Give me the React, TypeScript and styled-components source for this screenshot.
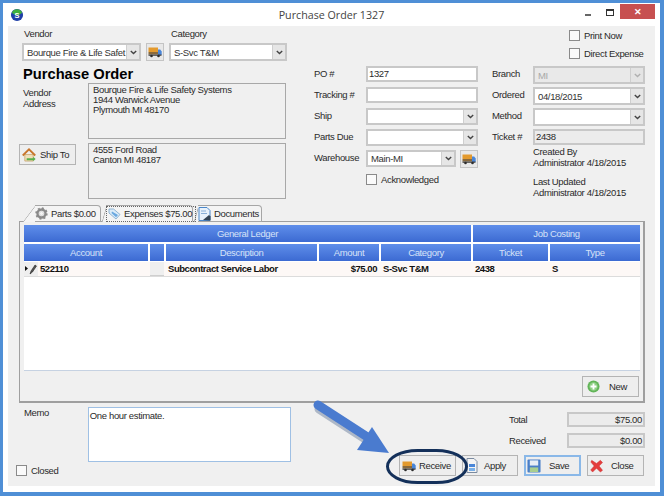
import styled, { createGlobalStyle } from "styled-components";

const GlobalStyle = createGlobalStyle`
  html, body {
    margin: 0;
    padding: 0;
    background: #4a8ad0;
  }
  * {
    box-sizing: border-box;
  }
  svg {
    flex: none;
  }
`;

const Window = styled.div`
  position: relative;
  width: 664px;
  height: 496px;
  overflow: hidden;
  background: #fff;
  border: solid #4f8fd6;
  border-width: 3px 4px 4px 3px;
  padding: 0 5px 6px 5px;
  display: flex;
  flex-direction: column;
  font-family: "Liberation Sans", Arial, sans-serif;
  font-size: 9.5px;
  letter-spacing: -0.35px;
  color: #2a2a2a;
`;
const TitleBar = styled.div`
  flex: none;
  height: 23px;
  margin: 0 -5px;
  position: relative;
  display: flex;
  align-items: center;
  justify-content: center;
  font-family: "Open Sans", sans-serif;
  font-size: 10.7px;
  letter-spacing: 0;
  color: #444;
`;
const AppLogo = styled.svg`
  position: absolute;
  left: 7px;
  top: 5px;
`;
const WindowButtons = styled.div`
  position: absolute;
  right: 5px;
  top: 1px;
  display: flex;
  align-items: flex-start;
`;
const MinButton = styled.div`
  width: 6px;
  height: 2px;
  margin: 10px 15px 0 0;
  background: #666;
`;
const MaxButton = styled.div`
  width: 8px;
  height: 7px;
  margin: 5px 6px 0 0;
  border: 1px solid #333;
  border-top-width: 2px;
`;
const CloseButton = styled.div`
  width: 35px;
  height: 15px;
  background: #c75050;
  color: #fff;
  font-size: 9px;
  font-weight: bold;
  display: flex;
  align-items: center;
  justify-content: center;
`;
const Client = styled.div`
  flex: 1;
  background: #f0f0f0;
  display: flex;
  flex-direction: column;
`;
const TopArea = styled.div`
  flex: none;
  height: 179px;
  display: flex;
`;
const LeftCol = styled.div`
  width: 265px;
  margin: 2px 0 0 14px;
`;
const HeadLabels = styled.div`
  display: flex;
  height: 15px;
  padding-left: 2px;
`;
const HeadLabel = styled.span<{ $w: number }>`
  width: ${(p) => p.$w}px;
  line-height: 11px;
`;
const ComboRow = styled.div`
  display: flex;
  gap: 5px;
`;
const Heading = styled.div`
  font-size: 14.7px;
  font-weight: bold;
  letter-spacing: 0;
  color: #000;
  height: 22px;
  line-height: 26px;
  margin-left: 1px;
`;
const AddressRow = styled.div`
  display: flex;
  margin-bottom: 4px;
`;
const AddressSide = styled.div`
  width: 66px;
  padding: 5px 0 0 1px;
  line-height: 10.5px;
`;
const AddressBox = styled.div`
  width: 198px;
  height: 56px;
  border: 1px solid #a8a8a8;
  background: #f0f0f0;
  padding: 1px 4px;
  line-height: 10px;
`;
const PushButton = styled.div<{ $w: number; $focus?: boolean; $gap: number; $pad: number }>`
  width: ${(p) => p.$w}px;
  height: 21px;
  background: #eeeeee;
  border: 1px solid ${(p) => (p.$focus ? "#8ab8e8" : "#b4b4b4")};
  box-shadow: ${(p) => (p.$focus ? "inset 0 0 0 1px #8ab8e8" : "none")};
  display: flex;
  align-items: center;
  gap: ${(p) => p.$gap}px;
  padding-left: ${(p) => p.$pad}px;
  flex: none;
`;
const ShipToButton = styled(PushButton)`
  margin: 1px 12px 0 -3px;
`;
const SmallIconButton = styled.div`
  width: 18px;
  height: 18px;
  flex: none;
  background: #e8e8e8;
  border: 1px solid #c4c4c4;
  display: flex;
  align-items: center;
  justify-content: center;
`;
const ComboBox = styled.div<{ $w: number; $h?: number; $disabled?: boolean }>`
  width: ${(p) => p.$w}px;
  height: ${(p) => p.$h ?? 18}px;
  flex: none;
  border: 2px solid #c8c8c8;
  background: ${(p) => (p.$disabled ? "#e9e9e9" : "#fff")};
  color: ${(p) => (p.$disabled ? "#a8a8a8" : "#333")};
  display: flex;
  align-items: center;
  padding-left: 3px;
  white-space: nowrap;
  overflow: hidden;
`;
const ComboText = styled.span`
  flex: 1;
  overflow: hidden;
`;
const ComboArrow = styled.div<{ $disabled?: boolean }>`
  flex: none;
  width: 13px;
  height: 100%;
  background: ${(p) => (p.$disabled ? "#e4e4e4" : "#e6e6e6")};
  border-left: 1px solid #cfcfcf;
  display: flex;
  align-items: center;
  justify-content: center;
`;
const MiddleCol = styled.div`
  width: 164px;
  margin-left: 27px;
  padding-top: 40px;
`;
const FieldRow = styled.div<{ $label: number; $h?: number }>`
  display: grid;
  grid-template-columns: ${(p) => p.$label}px 1fr;
  align-items: start;
  line-height: 15px;
  height: ${(p) => p.$h ?? 21}px;
`;
const TextBox = styled.div<{ $grey?: boolean }>`
  height: 16px;
  border: 2px solid #c8c8c8;
  background: ${(p) => (p.$grey ? "#ececec" : "#fff")};
  padding-left: 1px;
  line-height: 12px;
`;
const WarehouseInputs = styled.div`
  display: flex;
  gap: 4px;
`;
const CheckLine = styled.label<{ $ml?: number; $mt?: number }>`
  display: flex;
  align-items: center;
  gap: 4px;
  height: 11px;
  white-space: nowrap;
  margin-left: ${(p) => p.$ml ?? 0}px;
  margin-top: ${(p) => p.$mt ?? 0}px;
`;
const CheckBox = styled.span`
  width: 11px;
  height: 11px;
  border: 1px solid #8a8a8a;
  background: #fafafa;
  flex: none;
`;
const RightCol = styled.div`
  width: 153px;
  margin-left: 14px;
  padding-top: 4px;
`;
const RightFields = styled.div`
  margin-top: 7px;
`;
const Stamp = styled.div<{ $mt: number }>`
  margin: ${(p) => p.$mt}px 0 0 41px;
  line-height: 11px;
`;
const TabStrip = styled.div`
  flex: none;
  height: 17px;
  display: flex;
  padding-left: 27px;
  gap: 5px;
  position: relative;
  z-index: 1;
`;
const Tab = styled.div<{ $active?: boolean; $w: number; $slant: number; $angle: number }>`
  position: relative;
  width: ${(p) => p.$w}px;
  height: 17px;
  background: #f4f4f4;
  border: 1px solid #a6a6a6;
  border-left: none;
  border-bottom: ${(p) => (p.$active ? "1px solid #f4f4f4" : "1px solid #a6a6a6")};
  border-radius: 0 4px 0 0;
  display: flex;
  align-items: center;
  gap: 3px;
  white-space: nowrap;
  &::before {
    content: "";
    position: absolute;
    left: ${(p) => -p.$slant / 2}px;
    top: -1px;
    bottom: -1px;
    width: 14px;
    background: #f4f4f4;
    border-left: 1px solid #a6a6a6;
    border-top: 1px solid #a6a6a6;
    transform: skewX(-${(p) => p.$angle}deg);
    border-radius: 2px 0 0 0;
    z-index: -1;
  }
`;
const FocusLabel = styled.span`
  display: flex;
  align-items: center;
  gap: 3px;
  padding: 1px 3px 1px 1px;
  border: 1px dotted #666;
`;
const TabPanel = styled.div`
  flex: none;
  width: 626px;
  height: 182px;
  margin: -1px 0 0 11px;
  border: 1px solid #9f9f9f;
  border-right-width: 2px;
  border-bottom-width: 2px;
  padding: 3px 3px 0 4px;
  display: flex;
  flex-direction: column;
`;
const Table = styled.div`
  height: 146px;
  background: #fff;
  border-bottom: 1px solid #c6d2e2;
  display: grid;
  grid-template-columns: 124px 14px 151px 60px 90px 75px 90px;
  grid-auto-rows: 17px;
  column-gap: 2px;
  row-gap: 2px;
  align-content: start;
`;
const HeaderCell = styled.div<{ $span?: number }>`
  grid-column: span ${(p) => p.$span ?? 1};
  background: linear-gradient(#5f8eea, #3c6ad2);
  color: #d6e2f8;
  display: flex;
  align-items: center;
  justify-content: center;
`;
const DataRow = styled.div`
  grid-column: 1 / -1;
  display: grid;
  grid-template-columns: inherit;
  column-gap: 2px;
  height: 15px;
  margin-top: -1px;
  background: #fdf8f6;
  border-bottom: 1px solid #dcdcdc;
  font-weight: bold;
  letter-spacing: -0.45px;
  color: #111;
  line-height: 14px;
`;
const AccountCell = styled.div`
  display: flex;
  align-items: center;
`;
const RowMarker = styled.div`
  width: 14px;
  height: 14px;
  background: #eeeeee;
  margin-right: 2px;
  display: flex;
  align-items: center;
  justify-content: center;
`;
const EmptyCell = styled.div`
  background: #efefef;
  border-bottom: 1px solid #cfcfcf;
`;
const DataCell = styled.div<{ $right?: boolean }>`
  padding: 0 2px;
  text-align: ${(p) => (p.$right ? "right" : "left")};
  white-space: nowrap;
`;
const PanelFooter = styled.div`
  display: flex;
  justify-content: flex-end;
  padding: 5px 1px 0 0;
`;
const BottomArea = styled.div`
  flex: 1;
  display: flex;
  padding-top: 4px;
`;
const MemoCol = styled.div`
  width: 283px;
  padding-left: 16px;
`;
const MemoRow = styled.div`
  display: flex;
`;
const MemoLabel = styled.div`
  width: 64px;
`;
const MemoBox = styled.div`
  width: 204px;
  height: 55px;
  border: 1px solid #9fc0e4;
  background: #fff;
  padding: 2px 1px;
`;
const ActionCol = styled.div`
  margin-left: 108px;
  width: 246px;
  display: flex;
  flex-direction: column;
`;
const TotalRow = styled.div<{ $mt: number }>`
  display: flex;
  align-items: center;
  justify-content: space-between;
  margin: ${(p) => p.$mt}px 0 0 110px;
`;
const TotalBox = styled.div`
  width: 78px;
  height: 15px;
  border: 2px solid #c8c8c8;
  background: #ececec;
  text-align: right;
  padding-right: 1px;
  line-height: 11px;
`;
const ButtonBar = styled.div`
  display: flex;
  gap: 6px;
  margin-top: 7px;
`;
const Annotation = styled.svg`
  position: absolute;
  left: -3px;
  top: -3px;
  pointer-events: none;
`;

const Chevron = ({ color = "#444" }: { color?: string }) => (
  <svg width="7" height="5" viewBox="0 0 7 5">
    <path d="M.8 1l2.7 2.6L6.2 1" fill="none" stroke={color} strokeWidth="1.4" />
  </svg>
);

const Combo = ({
  w,
  h,
  text,
  disabled,
}: {
  w: number;
  h?: number;
  text?: string;
  disabled?: boolean;
}) => (
  <ComboBox $w={w} $h={h} $disabled={disabled}>
    <ComboText>{text}</ComboText>
    <ComboArrow $disabled={disabled}>
      <Chevron color={disabled ? "#b0b0b0" : "#444"} />
    </ComboArrow>
  </ComboBox>
);

const TruckIcon = ({ size = 14 }: { size?: number }) => (
  <svg width={size} height={size} viewBox="0 0 14 14">
    <rect x="0.5" y="2.5" width="9.5" height="4.5" fill="#e39a2e" />
    <rect x="0.5" y="7" width="9.5" height="2.5" fill="#8a6a3c" />
    <path d="M10 4.500h2.200l1.500 2v3.500H10z" fill="#4a86d8" />
    <rect x="0.5" y="9.500" width="13" height="1.300" fill="#444" />
    <circle cx="3.500" cy="11" r="1.300" fill="#2c2c2c" />
    <circle cx="10.500" cy="11" r="1.300" fill="#2c2c2c" />
  </svg>
);

const HouseIcon = () => (
  <svg width="14" height="14" viewBox="0 0 15 15">
    <path d="M3 7h9v7H3z" fill="#f0dfb8" stroke="#b98a44" strokeWidth=".6" />
    <path d="M.8 8L7.5 1.500 14.200 8" fill="none" stroke="#c8762c" strokeWidth="2" />
    <path d="M5 11h7v-1.600l2.600 2.400-2.600 2.400V13H5z" fill="#58b04c" />
  </svg>
);

const GearIcon = () => (
  <svg width="13" height="13" viewBox="0 0 13 13">
    <circle cx="6.500" cy="6.500" r="4" fill="none" stroke="#8a8a8a" strokeWidth="2.400" />
    <circle
      cx="6.500"
      cy="6.500"
      r="5.400"
      fill="none"
      stroke="#8a8a8a"
      strokeWidth="1.600"
      strokeDasharray="2 2.200"
    />
    <circle cx="6.500" cy="6.500" r="2" fill="#f4f4f4" stroke="#bbb" strokeWidth=".5" />
  </svg>
);

const TagIcon = () => (
  <svg width="13" height="12" viewBox="0 0 13 12">
    <path d="M1 1h4.500l6.500 5.500-4 4.500L1 5z" fill="#dcecf8" stroke="#7aa6cc" strokeWidth=".8" />
    <path d="M4 3.500l6 3.500-2 2.200L3.500 5z" fill="#6aa8e0" />
  </svg>
);

const DocIcon = () => (
  <svg width="13" height="14" viewBox="0 0 13 14">
    <path d="M1 .5h8l3 3v10H1z" fill="#e8f2fc" stroke="#4a86c8" />
    <path d="M5 13l6-5 1.500 1.500V13.500z" fill="#345" />
    <path d="M3 4h5M3 6.500h6" stroke="#8ab0d8" />
  </svg>
);

const PencilIcon = () => (
  <svg width="12" height="11" viewBox="0 0 12 11">
    <path d="M0 2l3 2.500L0 7z" fill="#111" />
    <path d="M5 10l1-3 4-6 1.500 1-4 6z" fill="#555" stroke="#111" strokeWidth=".5" />
  </svg>
);

const PlusIcon = () => (
  <svg width="13" height="13" viewBox="0 0 14 14">
    <circle cx="7" cy="7" r="6.500" fill="#62b458" />
    <circle cx="7" cy="7" r="4.500" fill="#8ed084" />
    <path d="M7 3.800v6.400M3.800 7h6.400" stroke="#fff" strokeWidth="2" />
  </svg>
);

const ApplyIcon = () => (
  <svg width="14" height="15" viewBox="0 0 14 15">
    <path d="M2 .5h7l3 3v11H2z" fill="#f4f4f4" stroke="#7a8aa0" />
    <rect x="4" y="6" width="6" height="3" fill="#4a86d8" />
    <rect x="4" y="10" width="6" height="3" fill="#7ab0e8" />
  </svg>
);

const SaveIcon = () => (
  <svg width="14" height="14" viewBox="0 0 15 15">
    <rect x=".5" y=".5" width="14" height="14" rx="1" fill="#4a7fc8" />
    <rect x="3" y="1.500" width="9" height="5.500" fill="#e8eef6" />
    <rect x="3" y="9" width="9" height="5" fill="#a8cf90" />
  </svg>
);

const CloseIcon = () => (
  <svg width="13" height="14" viewBox="0 0 15 15">
    <path
      d="M2 1l5.500 3.500L12 1l2.500 2.500-4 4 4 5L12 14.500l-4.500-4.500L3 14.500.8 12l4-4.500L1 3z"
      fill="#e43d3d"
      stroke="#c82c2c"
      strokeWidth=".5"
    />
  </svg>
);

const App = () => {
  return (
    <>
      <GlobalStyle />
      <Window>
        <TitleBar>
          <AppLogo width="14" height="14" viewBox="0 0 15 15">
            <circle cx="7.500" cy="7.500" r="6.500" fill="#1f3fa8" />
            <path d="M2 5a6 6 0 0 1 11 0 7 7 0 0 1-11 0z" fill="#3fae3f" />
            <text
              x="7.500"
              y="10.500"
              fontSize="8"
              fontWeight="bold"
              textAnchor="middle"
              fill="#fff"
              fontFamily="Liberation Sans"
            >
              S
            </text>
          </AppLogo>
          Purchase Order 1327
          <WindowButtons>
            <MinButton />
            <MaxButton />
            <CloseButton>✕</CloseButton>
          </WindowButtons>
        </TitleBar>
        <Client>
          <TopArea>
            <LeftCol>
              <HeadLabels>
                <HeadLabel $w={147}>Vendor</HeadLabel>
                <HeadLabel $w={100}>Category</HeadLabel>
              </HeadLabels>
              <ComboRow>
                <Combo w={119} text="Bourque Fire & Life Safet" />
                <SmallIconButton>
                  <TruckIcon />
                </SmallIconButton>
                <Combo w={118} text="S-Svc T&M" />
              </ComboRow>
              <Heading>Purchase Order</Heading>
              <AddressRow>
                <AddressSide>
                  Vendor
                  <br />
                  Address
                </AddressSide>
                <AddressBox>
                  Bourque Fire &amp; Life Safety Systems
                  <br />
                  1944 Warwick Avenue
                  <br />
                  Plymouth MI 48170
                </AddressBox>
              </AddressRow>
              <AddressRow>
                <ShipToButton $w={57} $gap={4} $pad={2}>
                  <HouseIcon />
                  Ship To
                </ShipToButton>
                <AddressBox>
                  4555 Ford Road
                  <br />
                  Canton MI 48187
                </AddressBox>
              </AddressRow>
            </LeftCol>
            <MiddleCol>
              <FieldRow $label={52}>
                <span>PO #</span>
                <TextBox>1327</TextBox>
              </FieldRow>
              <FieldRow $label={52}>
                <span>Tracking #</span>
                <TextBox />
              </FieldRow>
              <FieldRow $label={52}>
                <span>Ship</span>
                <Combo w={112} h={17} />
              </FieldRow>
              <FieldRow $label={52}>
                <span>Parts Due</span>
                <Combo w={112} h={17} />
              </FieldRow>
              <FieldRow $label={52} $h={24}>
                <span>Warehouse</span>
                <WarehouseInputs>
                  <Combo w={90} h={17} text="Main-MI" />
                  <SmallIconButton>
                    <TruckIcon />
                  </SmallIconButton>
                </WarehouseInputs>
              </FieldRow>
              <FieldRow $label={52}>
                <span />
                <CheckLine>
                  <CheckBox />
                  Acknowledged
                </CheckLine>
              </FieldRow>
            </MiddleCol>
            <RightCol>
              <CheckLine $ml={77}>
                <CheckBox />
                Print Now
              </CheckLine>
              <CheckLine $ml={77} $mt={7}>
                <CheckBox />
                Direct Expense
              </CheckLine>
              <RightFields>
                <FieldRow $label={41}>
                  <span>Branch</span>
                  <Combo w={112} text="MI" disabled />
                </FieldRow>
                <FieldRow $label={41}>
                  <span>Ordered</span>
                  <Combo w={112} text="04/18/2015" />
                </FieldRow>
                <FieldRow $label={41}>
                  <span>Method</span>
                  <Combo w={112} />
                </FieldRow>
                <FieldRow $label={41}>
                  <span>Ticket #</span>
                  <TextBox $grey>2438</TextBox>
                </FieldRow>
              </RightFields>
              <Stamp $mt={-4}>
                Created By
                <br />
                Administrator 4/18/2015
              </Stamp>
              <Stamp $mt={8}>
                Last Updated
                <br />
                Administrator 4/18/2015
              </Stamp>
            </RightCol>
          </TopArea>
          <TabStrip>
            <Tab $w={66} $slant={13} $angle={37}>
              <GearIcon />
              Parts $0.00
            </Tab>
            <Tab $w={87} $slant={5} $angle={16} $active>
              <FocusLabel>
                <TagIcon />
                Expenses $75.00
              </FocusLabel>
            </Tab>
            <Tab $w={64} $slant={5} $angle={16}>
              <DocIcon />
              Documents
            </Tab>
          </TabStrip>
          <TabPanel>
            <Table>
              <HeaderCell $span={5}>General Ledger</HeaderCell>
              <HeaderCell $span={2}>Job Costing</HeaderCell>
              <HeaderCell>Account</HeaderCell>
              <HeaderCell />
              <HeaderCell>Description</HeaderCell>
              <HeaderCell>Amount</HeaderCell>
              <HeaderCell>Category</HeaderCell>
              <HeaderCell>Ticket</HeaderCell>
              <HeaderCell>Type</HeaderCell>
              <DataRow>
                <AccountCell>
                  <RowMarker>
                    <PencilIcon />
                  </RowMarker>
                  522110
                </AccountCell>
                <EmptyCell />
                <DataCell>Subcontract Service Labor</DataCell>
                <DataCell $right>$75.00</DataCell>
                <DataCell>S-Svc T&amp;M</DataCell>
                <DataCell>2438</DataCell>
                <DataCell>S</DataCell>
              </DataRow>
            </Table>
            <PanelFooter>
              <PushButton $w={57} $gap={9} $pad={4}>
                <PlusIcon />
                New
              </PushButton>
            </PanelFooter>
          </TabPanel>
          <BottomArea>
            <MemoCol>
              <MemoRow>
                <MemoLabel>Memo</MemoLabel>
                <MemoBox>One hour estimate.</MemoBox>
              </MemoRow>
              <CheckLine $ml={-8} $mt={3}>
                <CheckBox />
                Closed
              </CheckLine>
            </MemoCol>
            <ActionCol>
              <TotalRow $mt={5}>
                <span>Total</span>
                <TotalBox>$75.00</TotalBox>
              </TotalRow>
              <TotalRow $mt={6}>
                <span>Received</span>
                <TotalBox>$0.00</TotalBox>
              </TotalRow>
              <ButtonBar>
                <PushButton $w={57} $gap={3} $pad={2}>
                  <TruckIcon />
                  Receive
                </PushButton>
                <PushButton $w={56} $gap={5} $pad={2}>
                  <ApplyIcon />
                  Apply
                </PushButton>
                <PushButton $w={57} $gap={8} $pad={2} $focus>
                  <SaveIcon />
                  Save
                </PushButton>
                <PushButton $w={57} $gap={8} $pad={2}>
                  <CloseIcon />
                  Close
                </PushButton>
              </ButtonBar>
            </ActionCol>
          </BottomArea>
        </Client>
        <Annotation width="664" height="496" viewBox="0 0 664 496">
          <path
            d="M318 407L372 442"
            stroke="#33507a"
            strokeOpacity=".35"
            strokeWidth="9"
            strokeLinecap="round"
            transform="translate(1 2)"
          />
          <path d="M318 405L372 440" stroke="#4a7bcf" strokeWidth="9" strokeLinecap="round" />
          <path d="M372 427L389 453L357 450z" fill="#4a7bcf" />
          <rect
            x="387.5"
            y="450.5"
            width="79"
            height="32"
            rx="30"
            ry="16"
            fill="none"
            stroke="#14305a"
            strokeWidth="3"
          />
        </Annotation>
      </Window>
    </>
  );
};

export default App;
